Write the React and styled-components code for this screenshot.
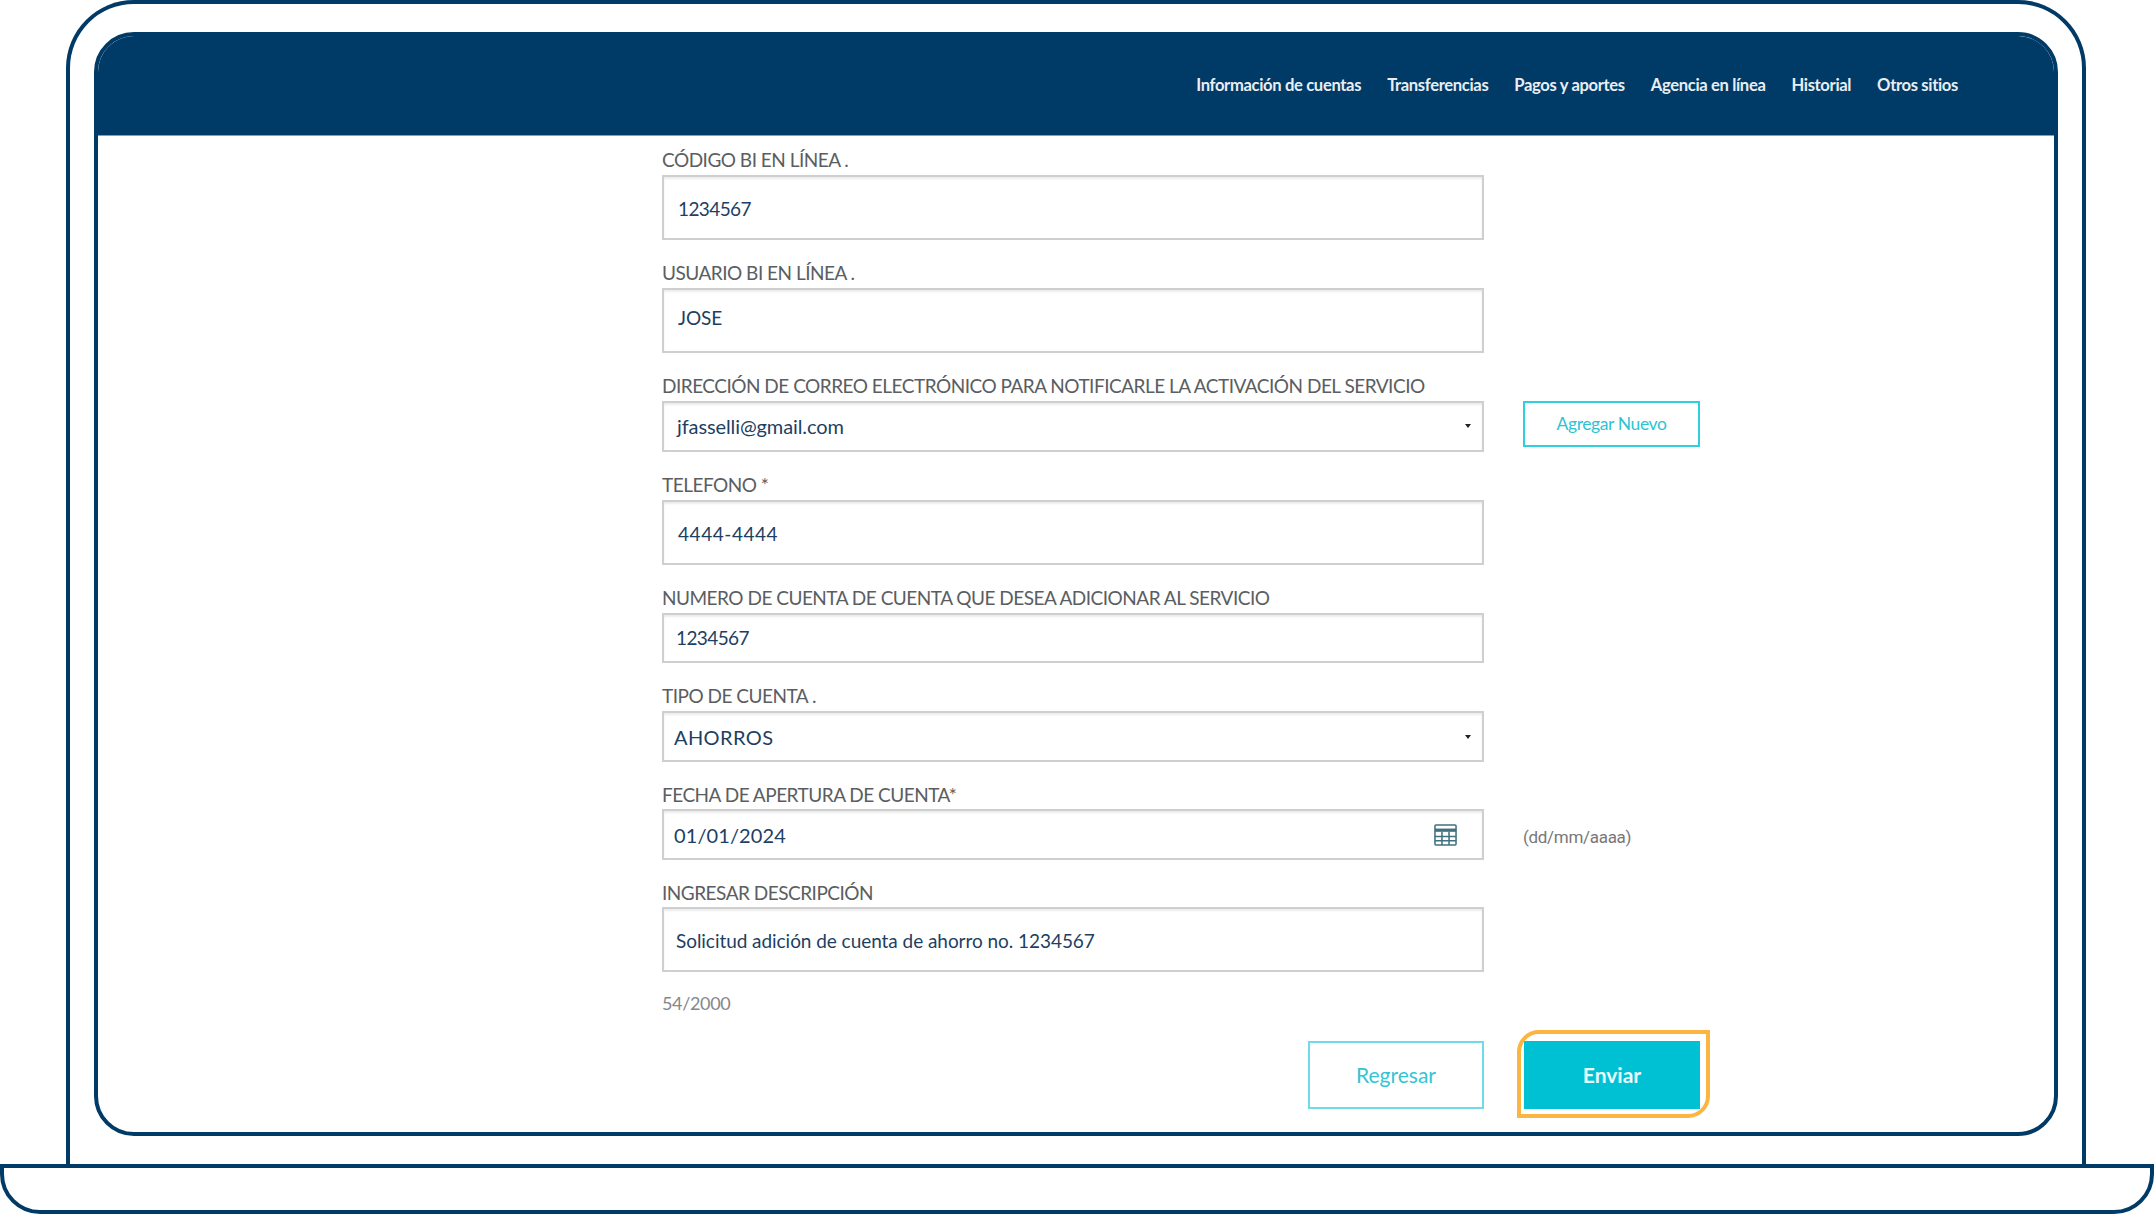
import styled, { createGlobalStyle } from 'styled-components';

const NAVY = '#003a66';
const CYAN = '#00c1d4';

const GlobalStyle = createGlobalStyle`
    html, body {
        margin: 0;
        padding: 0;
        background: #fff;
        overflow: hidden;
    }
    * {
        box-sizing: border-box;
    }
`;

const Page = styled.div`
    width: 2154px;
    height: 1214px;
    display: flex;
    flex-direction: column;
    font-family: Lato, "Liberation Sans", sans-serif;
`;

const Lid = styled.div`
    width: 2020px;
    height: 1164px;
    margin-left: 66px;
    padding: 28px 24px 0;
    border: 4px solid ${NAVY};
    border-bottom: 0;
    border-radius: 68px 68px 0 0;
`;

const Base = styled.div`
    height: 50px;
    border: 4px solid ${NAVY};
    border-radius: 0 0 40px 40px;
`;

const Screen = styled.div`
    height: 1104px;
    border: 4px solid ${NAVY};
    border-radius: 40px;
    overflow: hidden;
`;

const Header = styled.header`
    height: 100px;
    background: ${NAVY};
    border-bottom: 1px solid #7fa0b8;
    padding: 0 96px 2px 0;
    display: flex;
    justify-content: flex-end;
    align-items: center;
    gap: 26px;
`;

const NavLink = styled.a`
    color: #e8eef3;
    font-size: 16.6px;
    font-weight: 700;
    letter-spacing: -0.35px;
    white-space: nowrap;
`;

const Form = styled.form`
    margin-left: 564px;
    padding-top: 14px;
    display: flex;
    flex-direction: column;
`;

const Fields = styled.div`
    display: flex;
    flex-direction: column;
    gap: 23px;
`;

const Row = styled.div`
    display: grid;
    grid-template-columns: 822px 177px;
    column-gap: 39px;
    align-items: ${(p) => p.$align || 'start'};
`;

const Label = styled.label`
    display: block;
    height: ${(p) => p.$h || 25}px;
    line-height: 20px;
    color: #5a5e61;
    font-size: 19px;
    letter-spacing: -0.5px;
    white-space: nowrap;
`;

const Box = styled.div`
    height: ${(p) => p.$h}px;
    display: flex;
    align-items: center;
    justify-content: space-between;
    padding: ${(p) => p.$shift || 0}px 14px ${(p) => p.$lift || 0}px ${(p) => p.$left || 14}px;
    border: 2px solid #cfcfcf;
    box-shadow: inset 0 2px 2px #ececec;
    color: #1d3f63;
    font-size: ${(p) => p.$size || 19}px;
    letter-spacing: ${(p) => p.$spacing ?? -0.6}px;
    white-space: nowrap;
`;

const Caret = styled.span`
    width: 0;
    height: 0;
    margin-right: -3px;
    border-left: 3px solid transparent;
    border-right: 3px solid transparent;
    border-top: 4px solid #222;
`;

const SmallButton = styled.button`
    height: 46px;
    padding: 0 0 2px;
    background: #fff;
    border: 2px solid #2fd0de;
    color: #2cc4d4;
    font-family: inherit;
    font-size: 17.5px;
    letter-spacing: -0.4px;
`;

const Hint = styled.span`
    color: #777;
    font-family: Roboto, sans-serif;
    font-size: 17px;
    letter-spacing: -0.3px;
    padding-top: 4px;
`;

const Counter = styled.div`
    margin-top: 21px;
    height: 20px;
    line-height: 20px;
    color: #85888a;
    font-size: 18px;
    letter-spacing: -0.35px;
`;

const Actions = styled(Row)`
    margin-top: 28px;
`;

const ActionButton = styled.button`
    position: relative;
    width: 176px;
    height: 68px;
    padding: 0 0 2px;
    justify-self: end;
    font-family: inherit;
    font-size: 21px;
    font-weight: ${(p) => (p.$primary ? 700 : 400)};
    border: 2px solid ${(p) => (p.$primary ? CYAN : '#6fdbe6')};
    background: ${(p) => (p.$primary ? CYAN : '#fff')};
    color: ${(p) => (p.$primary ? '#e9fbfc' : '#35c4d6')};

    ${(p) =>
        p.$primary &&
        `&::after {
            content: '';
            position: absolute;
            top: -13px;
            right: -12px;
            bottom: -11px;
            left: -9px;
            border: 4px solid #fbb540;
            border-radius: 22px 0 22px 0;
        }`}
`;

const CalendarSvg = styled.svg`
    margin-right: 11px;
`;

const CalendarIcon = () => (
    <CalendarSvg width="23" height="23" viewBox="0 0 24 24" fill="none" stroke="#41707f" strokeWidth="1.6">
        <rect x="1" y="2" width="22" height="21" rx="1" />
        <path d="M1 7.5h22" strokeWidth="3.4" />
        <path d="M1 14h22M1 18.5h22M8.3 9v14M15.7 9v14" />
    </CalendarSvg>
);

const NAV_ITEMS = [
    'Información de cuentas',
    'Transferencias',
    'Pagos y aportes',
    'Agencia en línea',
    'Historial',
    'Otros sitios',
];

const App = () => (
    <Page>
        <GlobalStyle />
        <Lid>
            <Screen>
                <Header>
                    {NAV_ITEMS.map((item) => (
                        <NavLink key={item}>{item}</NavLink>
                    ))}
                </Header>
                <Form>
                    <Fields>
                        <div>
                            <Label>CÓDIGO BI EN LÍNEA .</Label>
                            <Row>
                                <Box $h={65} $shift={2}>1234567</Box>
                            </Row>
                        </div>
                        <div>
                            <Label>USUARIO BI EN LÍNEA .</Label>
                            <Row>
                                <Box $h={65} $lift={7} $spacing={-0.1}>JOSE</Box>
                            </Row>
                        </div>
                        <div>
                            <Label>DIRECCIÓN DE CORREO ELECTRÓNICO PARA NOTIFICARLE LA ACTIVACIÓN DEL SERVICIO</Label>
                            <Row>
                                <Box $h={51} $left={13} $lift={2} $size={20} $spacing={-0.1}>
                                    jfasselli@gmail.com
                                    <Caret />
                                </Box>
                                <SmallButton type="button">Agregar Nuevo</SmallButton>
                            </Row>
                        </div>
                        <div>
                            <Label>TELEFONO *</Label>
                            <Row>
                                <Box $h={65} $shift={2} $spacing={0.55}>4444-4444</Box>
                            </Row>
                        </div>
                        <div>
                            <Label>NUMERO DE CUENTA DE CUENTA QUE DESEA ADICIONAR AL SERVICIO</Label>
                            <Row>
                                <Box $h={50} $left={12} $lift={2}>1234567</Box>
                            </Row>
                        </div>
                        <div>
                            <Label>TIPO DE CUENTA .</Label>
                            <Row>
                                <Box $h={51} $left={10} $size={20} $spacing={0.4}>
                                    AHORROS
                                    <Caret />
                                </Box>
                            </Row>
                        </div>
                        <div>
                            <Label $h={24}>FECHA DE APERTURA DE CUENTA*</Label>
                            <Row $align="center">
                                <Box $h={51} $left={10} $size={20} $spacing={0.1}>
                                    01/01/2024
                                    <CalendarIcon />
                                </Box>
                                <Hint>(dd/mm/aaaa)</Hint>
                            </Row>
                        </div>
                        <div>
                            <Label $h={24}>INGRESAR DESCRIPCIÓN</Label>
                            <Row>
                                <Box $h={65} $left={12} $shift={1} $spacing={-0.05}>Solicitud adición de cuenta de ahorro no. 1234567</Box>
                            </Row>
                        </div>
                    </Fields>
                    <Counter>54/2000</Counter>
                    <Actions>
                        <ActionButton type="button">Regresar</ActionButton>
                        <ActionButton type="button" $primary>Enviar</ActionButton>
                    </Actions>
                </Form>
            </Screen>
        </Lid>
        <Base />
    </Page>
);

export default App;
